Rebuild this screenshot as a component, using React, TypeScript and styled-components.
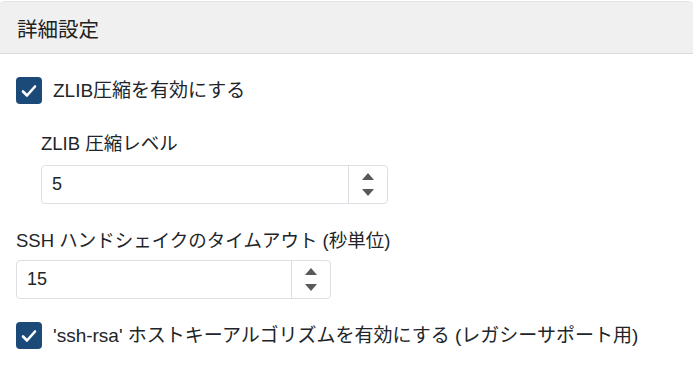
import * as React from "react";
import styled, { createGlobalStyle } from "styled-components";

const GlobalStyle = createGlobalStyle`
  html, body {
    margin: 0;
    padding: 0;
    background: #ffffff;
  }
  body {
    font-family: "Liberation Sans", "Noto Sans CJK JP", sans-serif;
    color: #212529;
  }
`;

const Card = styled.section`
  margin: 1px -1px 0 -1px;
  border: 1px solid #e2e2e2;
  border-radius: 6px 6px 0 0;
  border-bottom: none;
  height: 366px;
  overflow: hidden;
`;

const Header = styled.header`
  height: 51px;
  display: flex;
  align-items: center;
  padding-left: 17px;
  background: #f0f0f0;
  border-bottom: 1px solid #dcdcdc;
  font-size: 20.5px;
  color: #222;
`;

const Body = styled.div`
  display: flex;
  flex-direction: column;
  padding: 0 16px;
`;

const CheckRow = styled.label<{ $top: number }>`
  display: flex;
  align-items: center;
  gap: 11px;
  margin-top: ${(p) => p.$top}px;
  font-size: 19px;
  line-height: 27px;
  white-space: nowrap;
`;

const Box = styled.span`
  width: 26px;
  height: 27px;
  border-radius: 4px;
  background: #1b4a79;
  display: flex;
  align-items: center;
  justify-content: center;
  flex-shrink: 0;
`;

const Field = styled.div<{ $indent: number; $top: number }>`
  display: flex;
  flex-direction: column;
  margin-left: ${(p) => p.$indent}px;
  margin-top: ${(p) => p.$top}px;
`;

const FieldLabel = styled.div<{ $gap: number }>`
  font-size: 18.5px;
  line-height: 24px;
  margin-bottom: ${(p) => p.$gap}px;
`;

const NumberBox = styled.div<{ $width: number }>`
  width: ${(p) => p.$width}px;
  height: 39px;
  box-sizing: border-box;
  border: 1px solid #dcdfe3;
  border-radius: 4px;
  display: flex;
  align-items: stretch;
`;

const Value = styled.div`
  flex: 1;
  display: flex;
  align-items: center;
  padding-left: 10px;
  font-size: 18px;
`;

const Spinner = styled.div`
  width: 38px;
  border-left: 1px solid #dcdfe3;
  display: flex;
  flex-direction: column;
  align-items: center;
  justify-content: center;
  gap: 9px;
`;

function Arrow({ down }: { down?: boolean }) {
  return (
    <svg width="12" height="7" viewBox="0 0 12 7">
      <path d={down ? "M0 0H12L6 7Z" : "M6 0L12 7H0Z"} fill="#595959" />
    </svg>
  );
}

function Check() {
  return (
    <svg width="16" height="14" viewBox="0 0 16 14">
      <path
        d="M2 7.5L6 11.5L14 2.5"
        fill="none"
        stroke="#fff"
        strokeWidth="2.6"
        strokeLinecap="round"
        strokeLinejoin="round"
      />
    </svg>
  );
}

function NumberInput({ value, width }: { value: string; width: number }) {
  return (
    <NumberBox $width={width}>
      <Value>{value}</Value>
      <Spinner>
        <Arrow />
        <Arrow down />
      </Spinner>
    </NumberBox>
  );
}

export default function App() {
  return (
    <>
      <GlobalStyle />
      <Card>
        <Header>詳細設定</Header>
        <Body>
          <CheckRow $top={23}>
            <Box>
              <Check />
            </Box>
            ZLIB圧縮を有効にする
          </CheckRow>
          <Field $indent={25} $top={28}>
            <FieldLabel $gap={9}>ZLIB 圧縮レベル</FieldLabel>
            <NumberInput value="5" width={347} />
          </Field>
          <Field $indent={0} $top={25}>
            <FieldLabel $gap={7}>SSH ハンドシェイクのタイムアウト (秒単位)</FieldLabel>
            <NumberInput value="15" width={315} />
          </Field>
          <CheckRow $top={23}>
            <Box>
              <Check />
            </Box>
            'ssh-rsa' ホストキーアルゴリズムを有効にする (レガシーサポート用)
          </CheckRow>
        </Body>
      </Card>
    </>
  );
}
